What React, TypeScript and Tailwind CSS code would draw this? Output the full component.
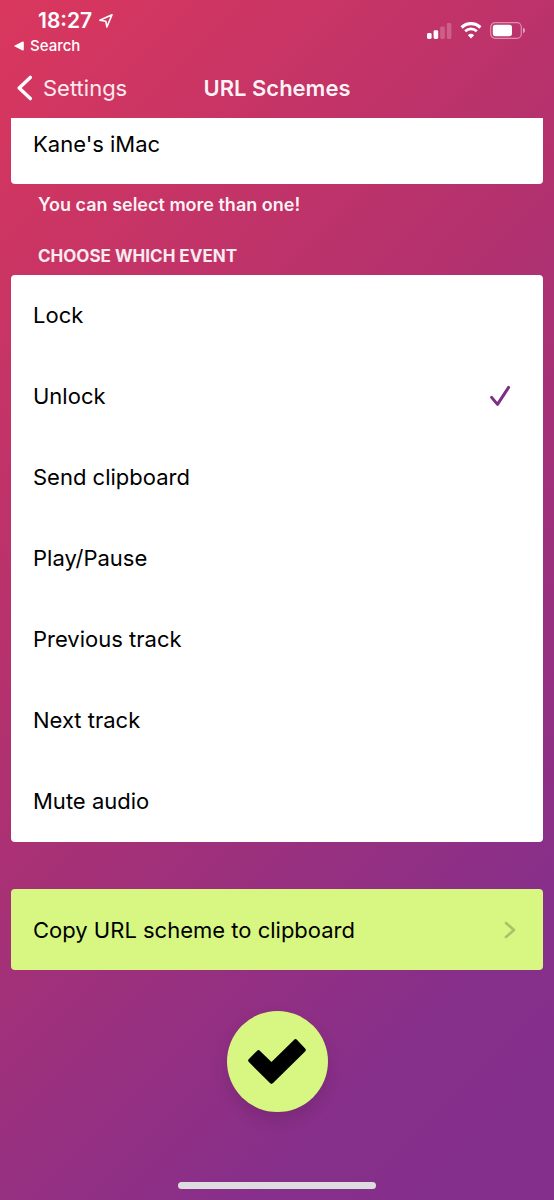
import { useState } from "react";

const EVENTS = [
  "Lock",
  "Unlock",
  "Send clipboard",
  "Play/Pause",
  "Previous track",
  "Next track",
  "Mute audio",
];

function Tick() {
  return (
    <svg width="22" height="22" viewBox="0 0 22 22" fill="none" aria-hidden="true">
      <path
        d="M2.6 12.4 8.5 19.4 19.6 2.4"
        stroke="#7d2f86"
        strokeWidth="3"
        strokeLinecap="round"
        strokeLinejoin="round"
      />
    </svg>
  );
}

function StatusBar() {
  return (
    <div className="flex items-start justify-between pt-2.5 pr-7 pl-3.5">
      <div>
        <div className="flex items-center gap-1.5 pl-6">
          <span className="text-[21px] leading-[22px] font-semibold">18:27</span>
          <svg width="16" height="16" viewBox="0 0 16 16" fill="none" aria-hidden="true">
            <path
              d="M14 1.8 1.8 7.2 7.8 8.2 8.9 14Z"
              stroke="currentColor"
              strokeWidth="1.6"
              strokeLinejoin="round"
            />
          </svg>
        </div>
        <a href="#search" className="mt-1 flex items-center gap-[6px] text-[15px] leading-5 font-medium">
          <svg width="10" height="10" viewBox="0 0 10 10" fill="currentColor" aria-hidden="true">
            <path d="M.8 4.4 8.6.5C9.2.2 9.8.5 9.8 1.2V8.8C9.8 9.5 9.2 9.8 8.6 9.5L.8 5.6C.2 5.3.2 4.7.8 4.4Z" />
          </svg>
          Search
        </a>
      </div>
      <div className="flex items-center gap-2 pt-3">
        <svg width="26" height="16" viewBox="0 0 26 16" fill="currentColor" aria-hidden="true">
          <rect x="1" y="10" width="4.6" height="6" rx="1.4" />
          <rect x="7.6" y="7.2" width="4.6" height="8.8" rx="1.4" />
          <rect x="14.2" y="3.6" width="4.6" height="12.4" rx="1.4" opacity=".22" />
          <rect x="20.8" y="0" width="4.6" height="16" rx="1.4" opacity=".22" />
        </svg>
        <svg width="22" height="17" viewBox="0 0 22 17" fill="none" aria-hidden="true">
          <path d="M1.6 5.5a13.4 13.4 0 0 1 18.8 0" stroke="currentColor" strokeWidth="3.2" />
          <path d="M5.2 9.3a8.3 8.3 0 0 1 11.6 0" stroke="currentColor" strokeWidth="2.8" />
          <path d="M11 16.4 7.9 13.2a4.5 4.5 0 0 1 6.2 0Z" fill="currentColor" />
        </svg>
        <svg width="36" height="17" viewBox="0 0 36 17" fill="none" aria-hidden="true">
          <rect x=".7" y=".7" width="30.6" height="15.6" rx="4.5" stroke="currentColor" strokeWidth="1.2" opacity=".45" />
          <rect x="2.8" y="2.8" width="19.2" height="11.4" rx="2.6" fill="currentColor" />
          <path d="M33 5.8c1.3.5 2 1.5 2 2.7s-.7 2.2-2 2.7Z" fill="currentColor" opacity=".55" />
        </svg>
      </div>
    </div>
  );
}

export default function App() {
  const [selected, setSelected] = useState("Unlock");

  return (
    <div className="flex min-h-screen flex-col bg-[linear-gradient(135deg,#da375d_0%,#b2316f_42%,#862f8b_83%,#842f8c_100%)] font-['Inter','Liberation_Sans',sans-serif] text-white">
      <StatusBar />

      <header className="mt-2 grid h-12 grid-cols-[1fr_auto_1fr] items-center px-4">
        <a href="#settings" className="flex items-center gap-2.5 text-[22px] leading-7 text-white/90">
          <svg width="17" height="26" viewBox="0 0 17 26" fill="none" aria-hidden="true">
            <path
              d="M14.3 2.4 3.2 13 14.3 23.6"
              stroke="white"
              strokeWidth="3.4"
              strokeLinecap="round"
              strokeLinejoin="round"
            />
          </svg>
          Settings
        </a>
        <h1 className="text-[22px] leading-7 font-semibold text-white/95">URL Schemes</h1>
      </header>

      <main className="flex flex-col px-[11px] pt-[6px]">
        <label className="flex h-[66px] items-center rounded-b-[4px] bg-white px-[22px] pb-[14px] text-[22px] leading-7 text-black">
          <input type="checkbox" className="sr-only" />
          Kane's iMac
        </label>
        <p className="mt-[9px] pl-[27px] text-[18px] leading-6 font-semibold text-white/95">
          You can select more than one!
        </p>

        <fieldset className="mt-[27px]">
          <legend className="pl-[27px] text-[17px] leading-6 font-bold text-white/90">
            CHOOSE WHICH EVENT
          </legend>
          <div className="mt-[7px] rounded-[4px] bg-white text-black">
            {EVENTS.map((event) => (
              <label
                key={event}
                className="flex h-[81px] items-center justify-between pr-8 pb-[2px] pl-[22px] text-[22px] leading-7"
              >
                <input
                  type="radio"
                  name="event"
                  value={event}
                  checked={selected === event}
                  onChange={() => setSelected(event)}
                  className="sr-only"
                />
                {event}
                {selected === event && <Tick />}
              </label>
            ))}
          </div>
        </fieldset>

        <button
          type="button"
          className="mt-[47px] flex h-[81px] items-center justify-between rounded-[4px] bg-[#d7f782] pr-[26px] pl-[22px] text-left text-[22px] leading-7 text-black"
        >
          Copy URL scheme to clipboard
          <svg width="14" height="18" viewBox="0 0 14 18" fill="none" aria-hidden="true">
            <path d="M3 2 11 9 3 16" stroke="#a9c265" strokeWidth="2.6" strokeLinecap="round" strokeLinejoin="round" />
          </svg>
        </button>

        <button
          type="button"
          aria-label="Done"
          className="mt-[41px] flex size-[101px] items-center justify-center self-center rounded-full bg-[#d7f782] shadow-[0_8px_16px_rgba(0,0,0,0.12)]"
        >
          <svg width="58" height="46" viewBox="0 0 58 46" aria-hidden="true">
            <path
              d="M2.5 21.5 10.5 13.5 23.5 26 47.5 2.5 55.5 11 23.5 42.5Z"
              fill="black"
              stroke="black"
              strokeWidth="4.5"
              strokeLinejoin="round"
            />
          </svg>
        </button>
      </main>

      <div className="mt-auto mb-[11px] h-[7px] w-[198px] self-center rounded-full bg-[#dddddf]" />
    </div>
  );
}
